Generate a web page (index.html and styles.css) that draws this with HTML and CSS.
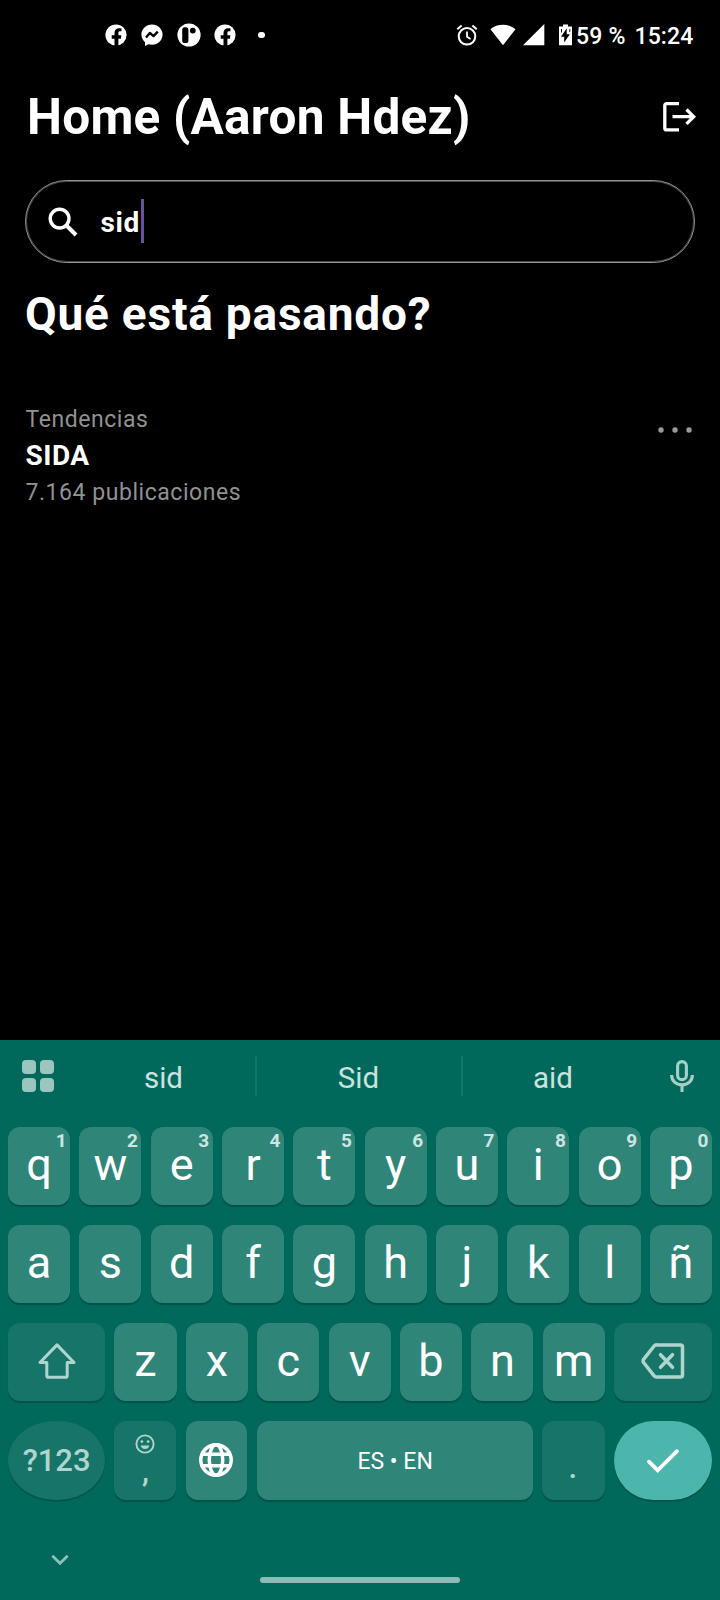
FILE: index.html
```html
<!DOCTYPE html>
<html lang="es">
<head>
<meta charset="utf-8">
<title>Home</title>
<link rel="stylesheet" href="styles.css">
</head>
<body>
<div class="screen">
  <header class="status">
    <div class="notifications">
      <svg class="n-icon" viewBox="0 0 24 24"><circle cx="12" cy="12" r="10.6" fill="#fff"/><path d="M10.500 24v-8.200H7.700v-3.500h2.800v-2.300c0-3 1.700-4.800 4.700-4.800 1 0 2.300.2 2.300.2v2.900h-1.500c-1.200 0-1.600.7-1.600 1.500v2.500h3l-.5 3.500h-2.500V24z" fill="#000"/></svg>
      <svg class="n-icon" viewBox="0 0 24 24"><path d="M12 1.400C6 1.400 1.400 5.800 1.400 11.600c0 3.200 1.400 5.800 3.600 7.600V23l3.400-1.700c1.100.3 2.300.5 3.600.5 6 0 10.600-4.400 10.600-10.200S18 1.400 12 1.400z" fill="#fff"/><path d="M6 14.600l3.900-4.700 3.600 3.200 4.300-4.500" fill="none" stroke="#000" stroke-width="2.400" stroke-linejoin="round"/></svg>
      <svg class="n-icon" viewBox="0 0 24 24"><circle cx="12" cy="12" r="11.600" fill="#fff"/><rect x="5.200" y="4.300" width="6.200" height="15.700" rx="2.600" fill="#000"/><circle cx="15.800" cy="7.600" r="2.900" fill="#000"/></svg>
      <svg class="n-icon" viewBox="0 0 24 24"><circle cx="12" cy="12" r="10.6" fill="#fff"/><path d="M10.500 24v-8.200H7.700v-3.500h2.800v-2.300c0-3 1.700-4.800 4.700-4.800 1 0 2.300.2 2.300.2v2.900h-1.500c-1.200 0-1.600.7-1.600 1.500v2.500h3l-.5 3.500h-2.500V24z" fill="#000"/></svg>
      <span class="n-dot"></span>
    </div>
    <div class="system">
      <svg class="s-alarm" viewBox="0 0 22 22" fill="none" stroke="#fff"><circle cx="11" cy="12.300" r="8.300" stroke-width="2"/><path d="M11 7.500v5.300l3.600 2.300" stroke-width="1.800"/><path d="M1.300 5.300l4.300-3.700M20.700 5.300l-4.300-3.700" stroke-width="2"/></svg>
      <svg class="s-wifi" viewBox="0 0 26 22"><path d="M.5 5.200C4 2.300 8.200.8 13 .8s9 1.500 12.500 4.400L13 21.200z" fill="#fff"/></svg>
      <svg class="s-signal" viewBox="0 0 22 22"><path d="M0 21.200L21.300 0v21.200z" fill="#fff"/></svg>
      <svg class="s-battery" viewBox="0 0 13 22"><path d="M4 .5h5v2h4v18.700H0V2.500h4z" fill="#fff"/><path d="M7.700 4.300L2 12.800h3.200v5.700l5.600-8.300H7.700z" fill="#000"/><path d="M2.500 5v3.500M10.800 5v3" stroke="#000" stroke-width=".9"/></svg>
      <span class="percent">59 %</span>
      <span class="clock">15:24</span>
    </div>
  </header>

  <div class="topbar">
    <h1 class="title">Home (Aaron Hdez)</h1>
    <svg class="logout" viewBox="0 0 34 32" fill="none" stroke="#fff" stroke-width="3.300"><path d="M17 2.700H4.500a1.700 1.700 0 0 0-1.700 1.700v22.800a1.700 1.700 0 0 0 1.700 1.700H17"/><path d="M10.500 15.700H32.500M24.500 8.500l7.200 7.200-7.200 7.200"/></svg>
  </div>

  <div class="search">
    <svg class="search-icon" viewBox="0 0 30 30" fill="none" stroke="#fff"><circle cx="11.600" cy="11.600" r="9.400" stroke-width="3.400"/><path d="M18 18l10 10" stroke-width="4"/></svg>
    <span class="query">sid</span><span class="caret"></span>
  </div>

  <h2 class="heading">Qué está pasando?</h2>

  <section class="trend">
    <div class="trend-text">
      <span class="muted tag">Tendencias</span>
      <span class="topic">SIDA</span>
      <span class="muted posts">7.164 publicaciones</span>
    </div>
    <svg class="more" viewBox="0 0 34 6" fill="#999"><circle cx="3" cy="3" r="2.700"/><circle cx="17" cy="3" r="2.700"/><circle cx="31" cy="3" r="2.700"/></svg>
  </section>

  <div class="keyboard">
    <div class="suggestions">
      <div class="apps"><i></i><i></i><i></i><i></i></div>
      <span class="word first">sid</span>
      <span class="word middle">Sid</span>
      <span class="word last">aid</span>
      <svg class="mic" viewBox="0 0 24 32" fill="none" stroke="#a6cfc8" stroke-width="3.100"><rect x="7.600" y="1.600" width="8.800" height="18" rx="4.400"/><path d="M1.600 15c0 6 4.400 9.900 10.400 9.900S22.400 21 22.400 15M12 24.700V32"/></svg>
    </div>

    <div class="row">
      <div class="key">q<sup>1</sup></div><div class="key">w<sup>2</sup></div><div class="key">e<sup>3</sup></div><div class="key">r<sup>4</sup></div><div class="key">t<sup>5</sup></div><div class="key">y<sup>6</sup></div><div class="key">u<sup>7</sup></div><div class="key">i<sup>8</sup></div><div class="key">o<sup>9</sup></div><div class="key">p<sup>0</sup></div>
    </div>
    <div class="row">
      <div class="key">a</div><div class="key">s</div><div class="key">d</div><div class="key">f</div><div class="key">g</div><div class="key">h</div><div class="key">j</div><div class="key">k</div><div class="key">l</div><div class="key">ñ</div>
    </div>
    <div class="row">
      <div class="key wide dim"><svg class="shift" viewBox="0 0 38 36" fill="none" stroke="#b0d5cf" stroke-width="3" stroke-linejoin="round"><path d="M19 1.900L2 19.500h6.800v13.200q0 1.600 1.600 1.600h17.200q1.600 0 1.600-1.600V19.500H36z"/></svg></div>
      <div class="key">z</div><div class="key">x</div><div class="key">c</div><div class="key">v</div><div class="key">b</div><div class="key">n</div><div class="key">m</div>
      <div class="key wide-end dim"><svg class="erase" viewBox="0 0 44 36" fill="none" stroke="#b0d5cf" stroke-width="3.500" stroke-linejoin="round"><path d="M15.500 1.900H39.500q2 0 2 2V32q0 2-2 2H15.500q-1.500 0-2.400-1.200L2.600 19.500q-1-1.600 0-3.200L13.100 3q.9-1.200 2.400-1.200z"/><path d="M19.500 11.700L31.500 24.300M31.500 11.700L19.500 24.300" stroke-linecap="round"/></svg></div>
    </div>
    <div class="row bottom">
      <div class="key wide dim symbols">?123</div>
      <div class="key dim comma"><svg class="smile" viewBox="0 0 20 20" fill="none" stroke="#b0d5cf" stroke-width="1.900"><circle cx="10" cy="10" r="8.600"/><path d="M5.600 11.500h8.800c-.6 2.400-2.300 3.600-4.400 3.600s-3.800-1.200-4.400-3.600z" fill="#b0d5cf" stroke="none"/><circle cx="6.900" cy="7.600" r="1.400" fill="#b0d5cf" stroke="none"/><circle cx="13.100" cy="7.600" r="1.400" fill="#b0d5cf" stroke="none"/></svg><span>,</span></div>
      <div class="key"><svg class="globe" viewBox="0 0 36 36" fill="none" stroke="#fff" stroke-width="3.500"><circle cx="18" cy="18" r="15.200"/><ellipse cx="18" cy="18" rx="6.700" ry="15.300"/><path d="M4 12.300h28M4 23.700h28"/></svg></div>
      <div class="key space">ES • EN</div>
      <div class="key dim period"><span>.</span></div>
      <div class="key wide-end enter"><svg class="check" viewBox="0 0 34 26" fill="none" stroke="#fff" stroke-width="3.800" stroke-linecap="round"><path d="M3 13.700l8.700 8.700L31 3.200"/></svg></div>
    </div>

    <div class="navbar">
      <svg class="chevron" viewBox="0 0 18 12" fill="none" stroke="#8fc1b9" stroke-width="2.700"><path d="M1.300 1.800L9 9.300l7.700-7.500"/></svg>
      <div class="handle"></div>
    </div>
  </div>
</div>
</body>
</html>
```
FILE: styles.css
```css
* { box-sizing: border-box; }
body { margin: 0; background: #000; }
svg { display: block; flex: none; }
.screen {
  width: 720px; height: 1600px; background: #000; color: #fff;
  font-family: Roboto, sans-serif; display: flex; flex-direction: column; overflow: hidden;
}

/* status bar */
.status { height: 70px; display: flex; justify-content: space-between; padding: 0 25.500px 0 103.500px; }
.notifications { display: flex; align-items: center; gap: 12.600px; }
.n-icon { width: 24px; height: 24px; }
.n-dot { width: 6.500px; height: 6.500px; border-radius: 50%; background: #fff; margin-left: 8.600px; }
.system { display: flex; align-items: center; font-weight: 500; font-size: 23px; line-height: 70px; white-space: nowrap; }
.s-alarm { width: 22px; height: 22px; margin-right: 11.500px; }
.s-wifi { width: 26px; height: 22px; margin-right: 7.500px; }
.s-signal { width: 22px; height: 22px; margin-right: 14px; }
.s-battery { width: 13px; height: 22px; margin-right: 4px; }
.percent { width: 58.500px; padding-top: 3px; letter-spacing: .2px; }
.clock { width: 60px; padding-top: 3px; letter-spacing: .1px; }

/* app header */
.topbar { height: 93px; display: flex; justify-content: space-between; align-items: center; padding: 0 24px 0 27px; }
.title { margin: 0; font-size: 49.500px; line-height: 60px; font-weight: 700; letter-spacing: .25px; white-space: nowrap; }
.logout { width: 34px; height: 32px; }

.search {
  height: 83px; margin: 17px 25px 0; border: 1px solid #959595; border-radius: 42px;
  box-shadow: inset 0 0 0 1px #484848;
  display: flex; align-items: center; padding-left: 22px;
}
.search-icon { width: 30px; height: 30px; margin-right: 22.500px; }
.query { font-size: 28px; font-weight: 700; line-height: 40px; letter-spacing: .6px; padding-top: 2px; }
.caret { width: 3px; height: 44px; background: #6750a4; margin: 0 0 1px 1px; }

.heading { margin: 23px 0 0 25px; font-size: 46px; line-height: 56px; font-weight: 700; letter-spacing: .78px; white-space: nowrap; }

.trend { display: flex; justify-content: space-between; align-items: flex-start; margin-top: 60px; padding: 0 28px 0 25.500px; }
.trend-text { display: flex; flex-direction: column; white-space: nowrap; }
.muted { color: #919191; font-size: 23px; line-height: 36px; letter-spacing: .55px; }
.topic { font-size: 28px; line-height: 35px; padding-bottom: 2px; font-weight: 700; letter-spacing: .5px; }
.more { width: 34px; height: 6px; margin-top: 25px; }

/* keyboard */
.keyboard { margin-top: auto; height: 560px; background: #00695c; padding: 0 8px; }
.suggestions { height: 87px; display: flex; align-items: flex-start; padding: 16px 18.500px 0 14px; color: #cbe2df; }
.apps { width: 32px; display: grid; grid-template-columns: 14px 14px; gap: 3.500px; margin-top: 4px; }
.apps i { height: 14px; border-radius: 4px; background: #9bc6c0; }
.word { height: 40px; line-height: 45px; text-align: center; font-size: 29.500px; }
.first { width: 203px; padding-left: 18px; border-right: 2px solid #187568; }
.middle { width: 206px; padding-right: 1px; border-right: 2px solid #187568; }
.last { width: 180px; }
.mic { width: 24px; height: 32px; margin-top: 4px; margin-left: auto; }

.row { display: flex; gap: 9.300px; margin-bottom: 20px; height: 78px; }
.key {
  position: relative; flex: 1 1 0; min-width: 0; display: flex; align-items: center; justify-content: center;
  background: #308579; border-radius: 12px; box-shadow: 0 1.500px 1px rgba(0, 50, 43, .4);
  font-size: 45px; line-height: 76px; padding-bottom: 2px;
}
.key sup { position: absolute; top: 4px; right: 3.500px; font-size: 19px; line-height: 20px; font-weight: 700; color: #cde5e1; }
.wide { flex: 0 0 97.200px; }
.wide-end { flex: 0 0 98px; }
.dim { background: #177468; color: #b0d5cf; }
.bottom { height: 79px; margin-bottom: 0; }
.shift { width: 38px; height: 36px; }
.erase { width: 44px; height: 36px; }
.symbols { font-size: 31px; font-weight: 500; border-radius: 47px / 39.500px; padding-bottom: 0; }
.comma { flex-direction: column; justify-content: flex-start; padding-top: 13px; }
.smile { width: 20px; height: 20px; }
.comma span { font-size: 31px; line-height: 36px; font-weight: 500; }
.globe { width: 36px; height: 36px; }
.space { flex: 0 0 276px; font-size: 23px; padding: 3px 0 0 1px; }
.period { font-size: 31px; font-weight: 500; padding: 0 1px 0 0; }
.period span { padding-top: 15px; }
.enter { background: #4db6ac; border-radius: 40px; padding-bottom: 0; }
.check { width: 34px; height: 26px; }

.navbar { display: grid; grid-template-columns: 252px 200px; padding-top: 54px; }
.chevron { width: 18px; height: 12px; margin-left: 43px; }
.handle { height: 6px; border-radius: 3px; background: #8bbcb5; margin-top: 23px; }
```
